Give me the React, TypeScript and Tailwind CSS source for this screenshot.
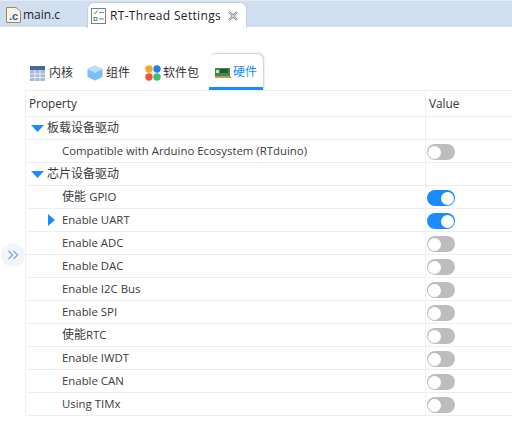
import React from "react";

const font = { fontFamily: '"Open Sans","Noto Sans CJK SC",sans-serif' };

function Toggle({ on }: { on?: boolean }) {
  return on ? (
    <div className="w-[28px] h-[16px] rounded-full bg-[#1a8cff] flex items-center justify-end pr-[1px]">
      <div className="w-[13px] h-[13px] rounded-full bg-white" />
    </div>
  ) : (
    <div className="w-[28px] h-[16px] rounded-full bg-[#bdbdbd] flex items-center pl-[1px]">
      <div className="w-[13px] h-[13px] rounded-full bg-white" />
    </div>
  );
}

function Down() {
  return (
    <svg width="13" height="7" viewBox="0 0 13 7" className="mr-[3px]">
      <path d="M0 0H13L6.5 7Z" fill="#1a8cff" />
    </svg>
  );
}

function Row({ label, prefix, group, toggle, on, arrow }: { label?: string; prefix?: string; group?: boolean; toggle?: boolean; on?: boolean; arrow?: boolean }) {
  return (
    <div className="flex h-[23px] border-b border-[#eeeeee]">
      <div className={`w-[400px] flex items-center border-r border-[#f0f0f0] ${group ? "pl-[5px]" : arrow ? "pl-[22px]" : "pl-[36px]"}`}>
        {group && <Down />}
        {arrow && (
          <svg width="7" height="12" viewBox="0 0 7 12" className="mr-[7px]">
            <path d="M0 0L7 6L0 12Z" fill="#1a8cff" />
          </svg>
        )}
        <span className="text-[12px] leading-[22px] text-[#3a3a3a] whitespace-pre">
          {prefix && <span>{prefix}</span>}
          {label && <span className={group ? "text-[12px]" : "text-[11.4px]"}>{label}</span>}
        </span>
      </div>
      <div className="flex-1 flex items-center pl-[1px] pt-[2px]">{toggle && <Toggle on={on} />}</div>
    </div>
  );
}

function TabIconSettings() {
  return (
    <svg width="15" height="16" viewBox="0 0 15 16" fill="none">
      <rect x="0.5" y="0.5" width="14" height="15" fill="#fff" stroke="#76838f" />
      <path d="M3 4.5l1.2 1.2L6.5 2.5" stroke="#55815a" />
      <rect x="3" y="9.5" width="3" height="3" stroke="#76838f" />
      <path d="M8 4.5h5M8 11h5" stroke="#76838f" />
    </svg>
  );
}

export default function App() {
  return (
    <div className="w-[512px] h-[431px] bg-white overflow-hidden" style={font}>
      <div className="h-[27px] bg-[#cfdff0] border-t border-[#e3ebf4] flex items-end relative">
        <div className="w-[87px] h-[25px] flex items-center pl-[6px]">
          <svg width="15" height="16" viewBox="0 0 15 16">
            <path d="M0.5 0.5H10L14.5 4.5V15.5H0.5Z" fill="#f7f3e6" stroke="#9c8a5e" />
            <text x="3" y="13" fontSize="11" fontWeight="700" fill="#2f5f9e" fontFamily="Liberation Sans">.c</text>
          </svg>
          <span className="ml-[2px] text-[12px] text-[#222]">main.c</span>
        </div>
        <div className="w-[160px] h-[26px] bg-white rounded-t-[7px] border-x border-t border-[#c3d2e2] flex items-center pl-[3px] -mb-px">
          <TabIconSettings />
          <span className="ml-[4px] text-[12px] text-[#222] whitespace-nowrap tracking-[0.33px]">RT-Thread Settings</span>
          <svg width="10" height="10" viewBox="0 0 10 10" className="ml-[7px]">
            <path d="M1 1L9 9M9 1L1 9" stroke="#8a8a8a" strokeWidth="2.4" />
            <path d="M1 1L9 9M9 1L1 9" stroke="#f2f2f2" strokeWidth="0.8" />
          </svg>
        </div>
      </div>

      <div className="flex">
        <div className="w-[25px] flex flex-col pt-[216px] items-center">
          <div className="w-[24px] h-[24px] rounded-full bg-[#f1f5fa] flex items-center justify-center">
            <svg width="12" height="10" viewBox="0 0 12 10" fill="none" stroke="#7fa8d6" strokeWidth="1.2">
              <path d="M1.5 1L5.5 5L1.5 9M6.5 1L10.5 5L6.5 9" />
            </svg>
          </div>
        </div>

        <div className="flex-1">
          <div className="h-[63px] flex items-end pl-[5px]">
            <div className="flex items-center h-[36px] pt-[2px]">
              <svg width="15" height="15" viewBox="0 0 15 15" className="mr-[4px]">
                <rect width="15" height="4" fill="#47689f" />
                <rect y="4" width="15" height="11" fill="#a9bad9" />
                <path d="M0 8h15M0 11.5h15M5 4v11M10 4v11" stroke="#e6ecf6" />
              </svg>
              <span className="text-[12px] text-[#333]">内核</span>
            </div>
            <div className="flex items-center h-[36px] pt-[2px] ml-[14px]">
              <svg width="16" height="16" viewBox="0 0 16 16" className="mr-[3px]">
                <path d="M8 0.5L15.5 4V12L8 15.5L0.5 12V4Z" fill="#7dbdf5" />
                <path d="M8 0.5L15.5 4L8 8L0.5 4Z" fill="#bcdffb" />
              </svg>
              <span className="text-[12px] text-[#333]">组件</span>
            </div>
            <div className="flex items-center h-[36px] pt-[2px] ml-[15px]">
              <svg width="16" height="16" viewBox="0 0 16 16" className="mr-[2px]">
                <circle cx="4" cy="4" r="3.7" fill="#f7a823" />
                <circle cx="12" cy="4" r="3.7" fill="#2a7ff0" />
                <circle cx="4" cy="12" r="3.7" fill="#f0523d" />
                <circle cx="12" cy="12" r="3.7" fill="#36c46f" />
              </svg>
              <span className="text-[12px] text-[#333] whitespace-nowrap">软件包</span>
            </div>
            <div className="relative flex items-center h-[36px] w-[54px] ml-[10px] pl-[6px] pt-[3px] bg-white rounded-t-[6px] border-b-[3px] border-[#1a8cff] shadow-[1px_-1px_2px_rgba(0,0,0,0.22)]">
              <svg width="16" height="11" viewBox="0 0 16 11" className="mr-[2px] shrink-0">
                <rect y="1" width="15" height="8" fill="#3c8a50" />
                <rect x="5" y="2" width="8" height="4" fill="#27563a" />
                <rect x="1" y="3" width="3" height="3" fill="#d9d9c0" />
                <rect y="9" width="16" height="2" fill="#b9a24e" />
              </svg>
              <span className="text-[12px] text-[#1a8cff] whitespace-nowrap">硬件</span>
            </div>
          </div>

          <div className="border-l border-t border-[#eeeeee]">
            <div className="flex h-[26px] border-b border-[#eeeeee]">
              <div className="w-[400px] flex items-center pl-[3px] border-r border-[#f0f0f0] text-[11.8px] text-[#333]">Property</div>
              <div className="flex-1 flex items-center pl-[3px] text-[11.8px] text-[#333]">Value</div>
            </div>
            <Row group label="板载设备驱动" />
            <Row label="Compatible with Arduino Ecosystem (RTduino)" toggle />
            <Row group label="芯片设备驱动" />
            <Row prefix="使能 " label="GPIO" toggle on />
            <Row arrow label="Enable UART" toggle on />
            <Row label="Enable ADC" toggle />
            <Row label="Enable DAC" toggle />
            <Row label="Enable I2C Bus" toggle />
            <Row label="Enable SPI" toggle />
            <Row prefix="使能" label="RTC" toggle />
            <Row label="Enable IWDT" toggle />
            <Row label="Enable CAN" toggle />
            <Row label="Using TIMx" toggle />
          </div>
        </div>
      </div>
    </div>
  );
}
